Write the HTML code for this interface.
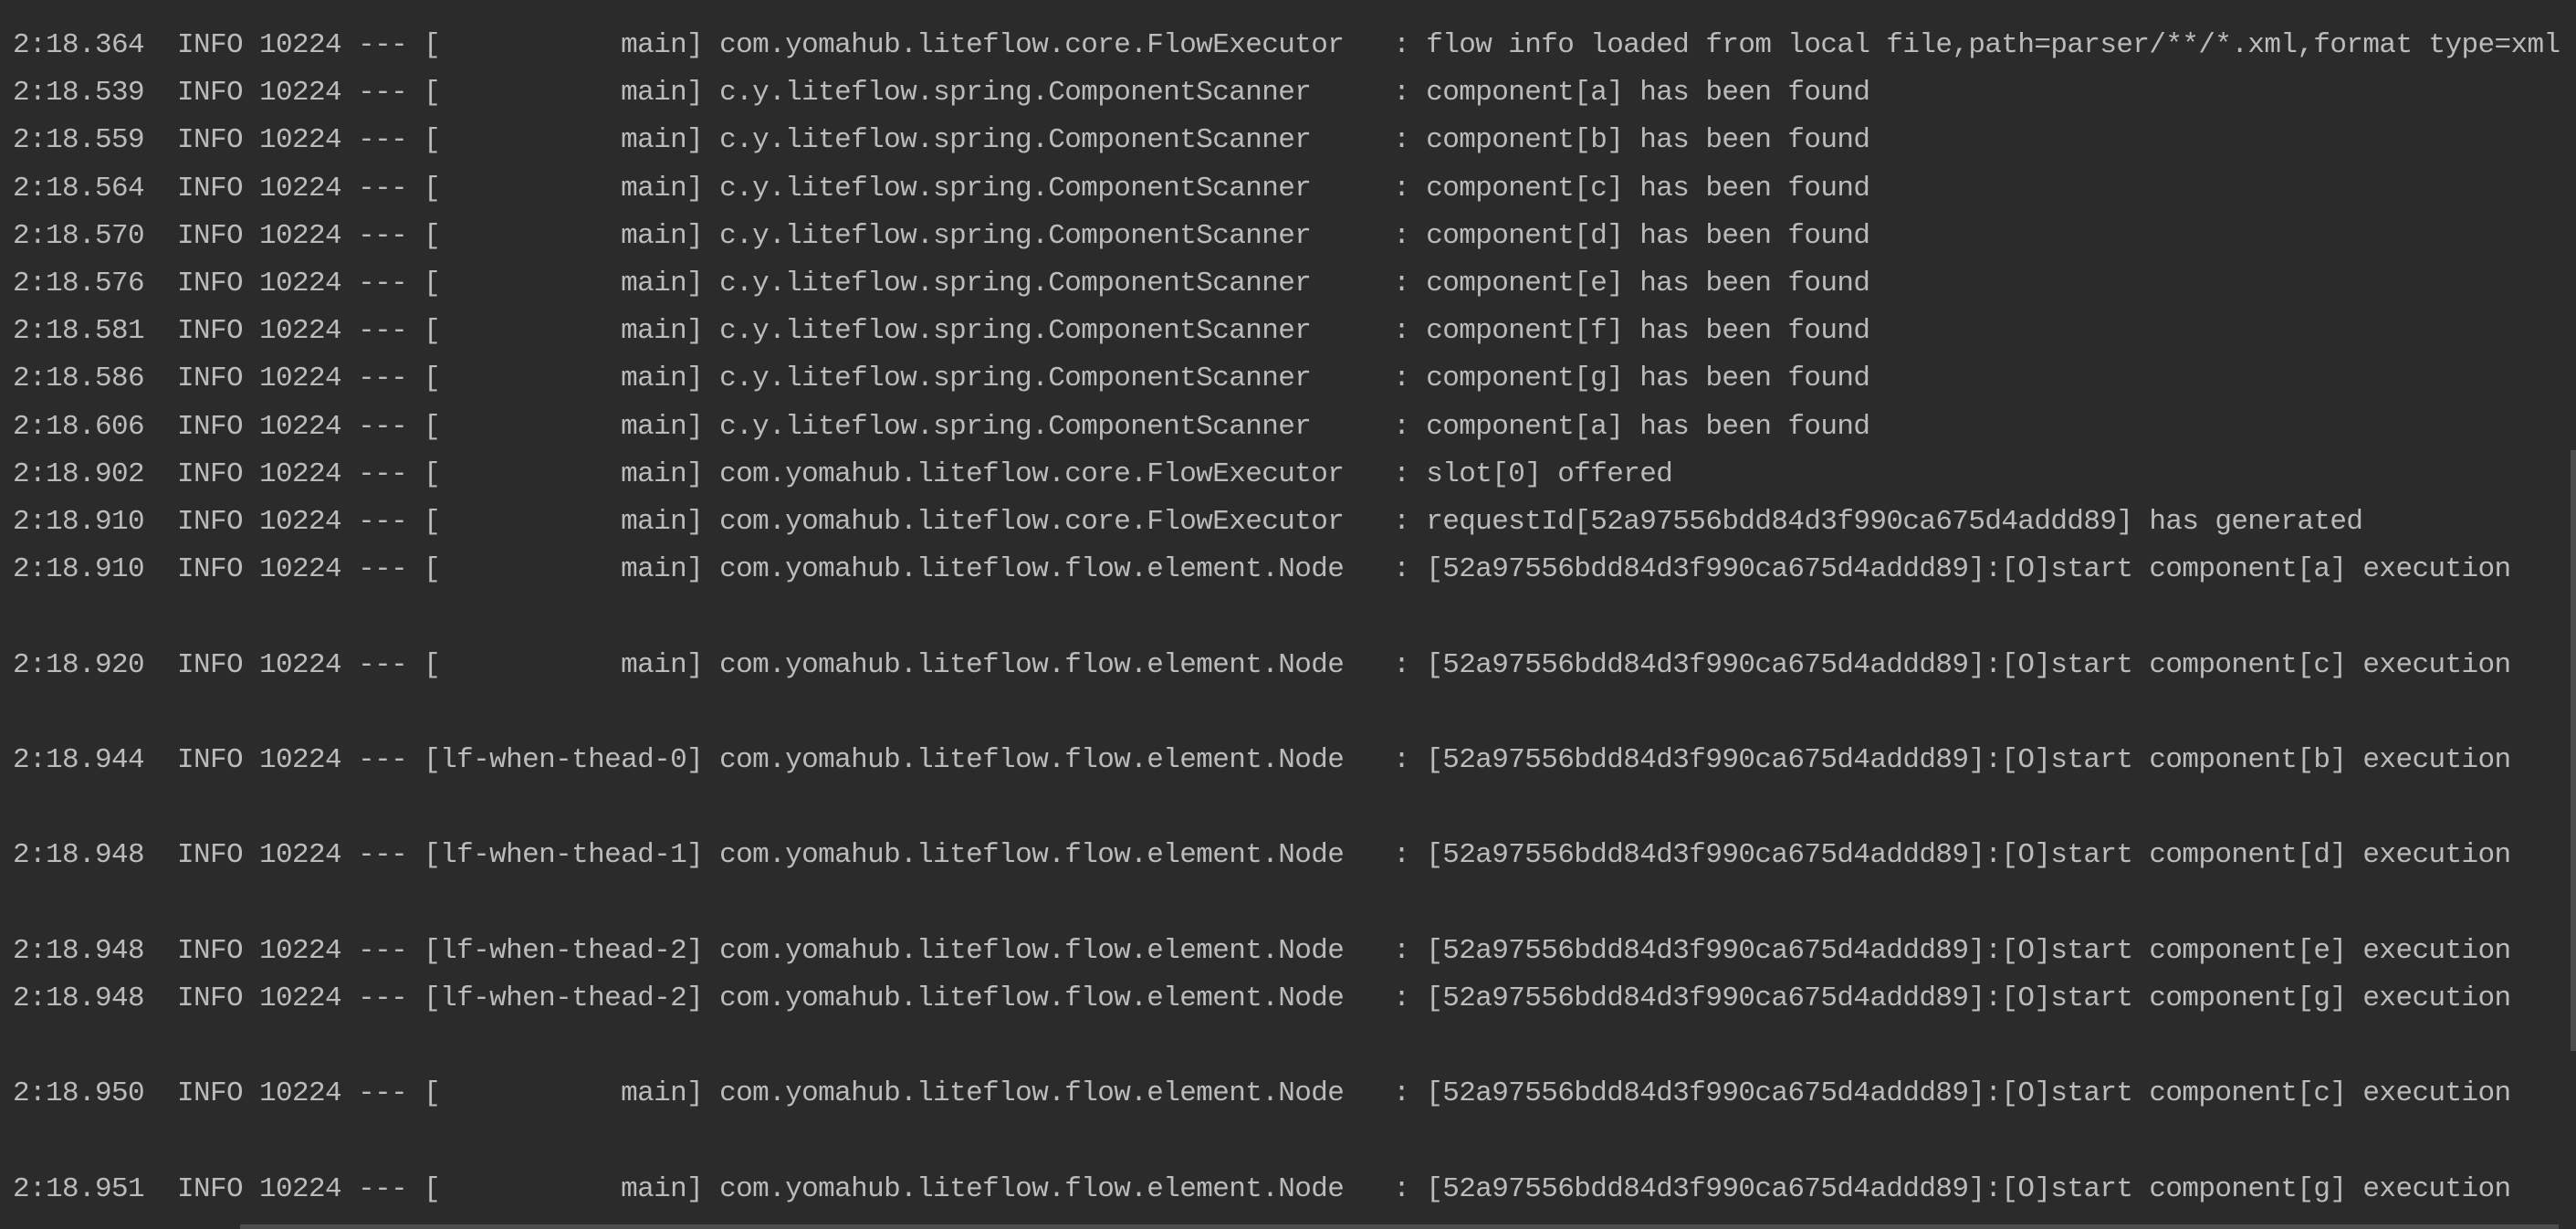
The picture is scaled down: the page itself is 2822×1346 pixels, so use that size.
<!DOCTYPE html>
<html><head><meta charset="utf-8"><style>
html,body{margin:0;padding:0;background:#2b2b2b;width:2822px;height:1346px;overflow:hidden}
pre{margin:0;position:absolute;left:14px;top:24px;font-family:"Liberation Mono",monospace;font-size:31px;letter-spacing:-0.6px;line-height:52.2px;color:#bbbbbb;white-space:pre}
.vs{position:absolute;left:2816px;top:493px;width:6px;height:658px;background:#4d4d4d}
.hs{position:absolute;left:263px;top:1341px;width:2540px;height:5px;background:#4d4d4d}
</style></head><body>
<pre>2:18.364  INFO 10224 --- [           main] com.yomahub.liteflow.core.FlowExecutor   : flow info loaded from local file,path=parser/**/*.xml,format type=xml
2:18.539  INFO 10224 --- [           main] c.y.liteflow.spring.ComponentScanner     : component[a] has been found
2:18.559  INFO 10224 --- [           main] c.y.liteflow.spring.ComponentScanner     : component[b] has been found
2:18.564  INFO 10224 --- [           main] c.y.liteflow.spring.ComponentScanner     : component[c] has been found
2:18.570  INFO 10224 --- [           main] c.y.liteflow.spring.ComponentScanner     : component[d] has been found
2:18.576  INFO 10224 --- [           main] c.y.liteflow.spring.ComponentScanner     : component[e] has been found
2:18.581  INFO 10224 --- [           main] c.y.liteflow.spring.ComponentScanner     : component[f] has been found
2:18.586  INFO 10224 --- [           main] c.y.liteflow.spring.ComponentScanner     : component[g] has been found
2:18.606  INFO 10224 --- [           main] c.y.liteflow.spring.ComponentScanner     : component[a] has been found
2:18.902  INFO 10224 --- [           main] com.yomahub.liteflow.core.FlowExecutor   : slot[0] offered
2:18.910  INFO 10224 --- [           main] com.yomahub.liteflow.core.FlowExecutor   : requestId[52a97556bdd84d3f990ca675d4addd89] has generated
2:18.910  INFO 10224 --- [           main] com.yomahub.liteflow.flow.element.Node   : [52a97556bdd84d3f990ca675d4addd89]:[O]start component[a] execution

2:18.920  INFO 10224 --- [           main] com.yomahub.liteflow.flow.element.Node   : [52a97556bdd84d3f990ca675d4addd89]:[O]start component[c] execution

2:18.944  INFO 10224 --- [lf-when-thead-0] com.yomahub.liteflow.flow.element.Node   : [52a97556bdd84d3f990ca675d4addd89]:[O]start component[b] execution

2:18.948  INFO 10224 --- [lf-when-thead-1] com.yomahub.liteflow.flow.element.Node   : [52a97556bdd84d3f990ca675d4addd89]:[O]start component[d] execution

2:18.948  INFO 10224 --- [lf-when-thead-2] com.yomahub.liteflow.flow.element.Node   : [52a97556bdd84d3f990ca675d4addd89]:[O]start component[e] execution
2:18.948  INFO 10224 --- [lf-when-thead-2] com.yomahub.liteflow.flow.element.Node   : [52a97556bdd84d3f990ca675d4addd89]:[O]start component[g] execution

2:18.950  INFO 10224 --- [           main] com.yomahub.liteflow.flow.element.Node   : [52a97556bdd84d3f990ca675d4addd89]:[O]start component[c] execution

2:18.951  INFO 10224 --- [           main] com.yomahub.liteflow.flow.element.Node   : [52a97556bdd84d3f990ca675d4addd89]:[O]start component[g] execution</pre>
<div class="vs"></div><div class="hs"></div>
</body></html>
